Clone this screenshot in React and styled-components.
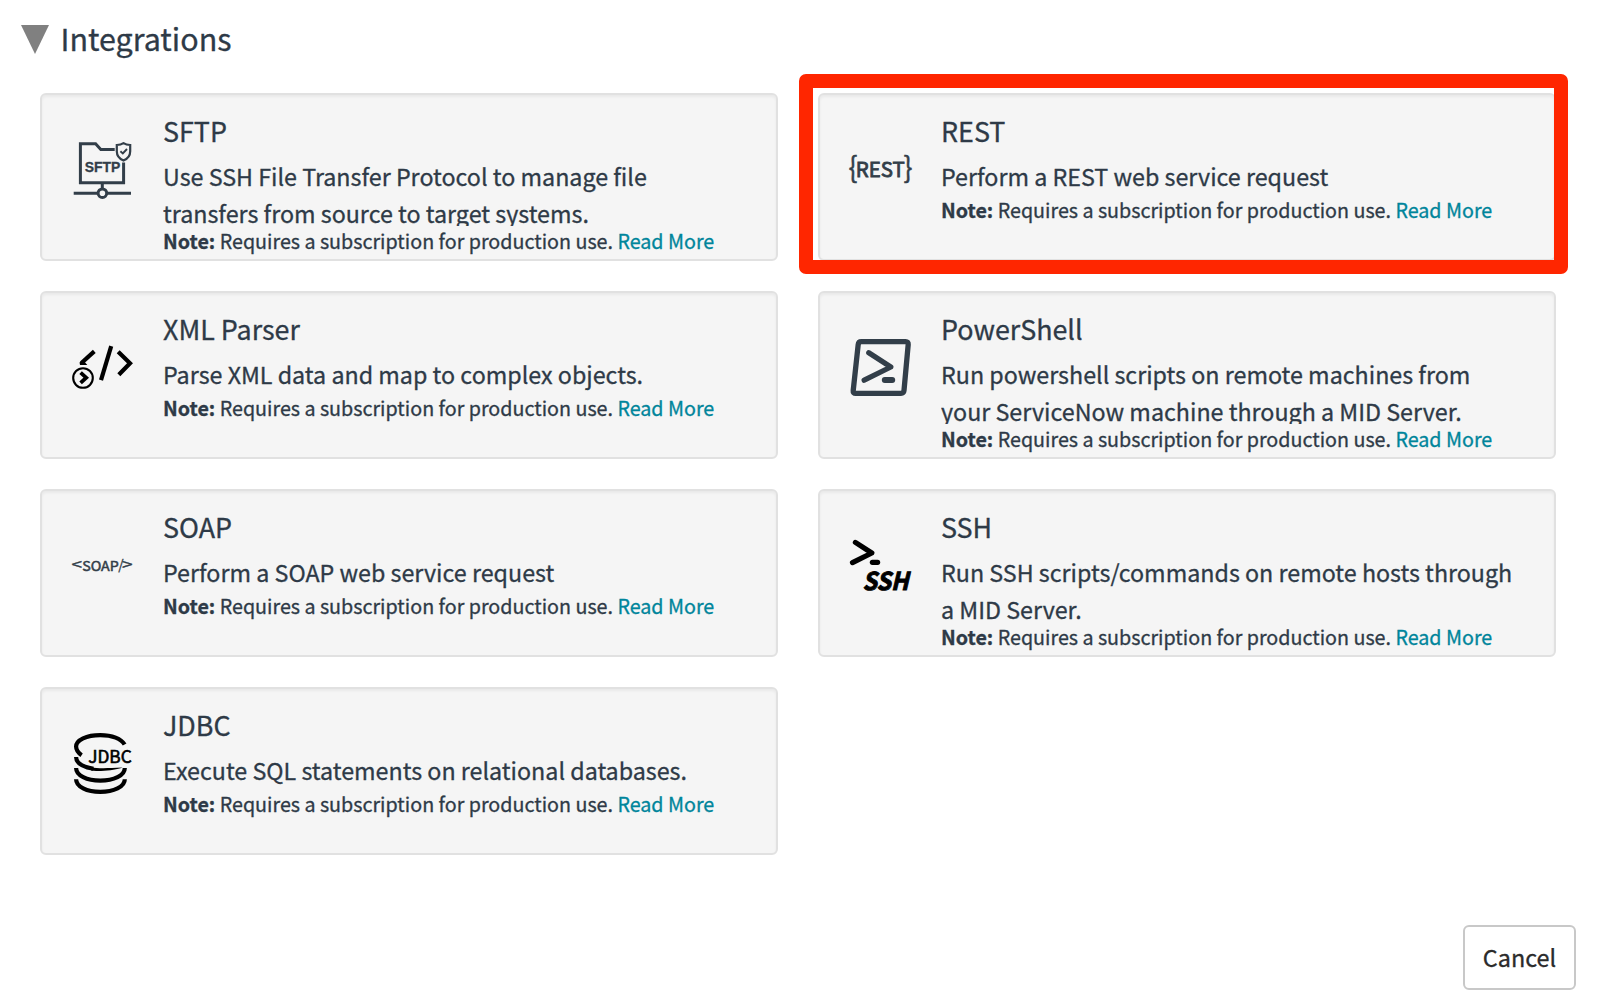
import React from 'react';
import styled, { createGlobalStyle } from 'styled-components';

const sans = `"Noto Sans CJK SC", "Noto Sans", sans-serif`;
const slate = '#2e3a47';
const iconSlate = '#323e49';

const GlobalStyle = createGlobalStyle`
  *, *::before, *::after { box-sizing: border-box; }
  body {
    margin: 0;
    background: #fff;
    color: ${slate};
    font-family: ${sans};
    -webkit-text-stroke: 0.3px currentColor;
  }
  svg text { -webkit-text-stroke: initial; }
  #root { height: 996px; overflow: hidden; }
`;

const Page = styled.main`
  display: flex;
  flex-direction: column;
  padding-top: 17px;
`;

const SectionHeader = styled.header`
  display: flex;
  align-items: flex-start;
  gap: 11.5px;
  height: 76px;
  padding-left: 21px;
`;

const Triangle = styled.svg`
  width: 28px;
  height: 29px;
  margin-top: 8px;
`;

const SectionTitle = styled.h1`
  margin: 0;
  font-size: 30.45px;
  font-weight: 400;
  line-height: 43px;
`;

const Grid = styled.div`
  display: grid;
  grid-template-columns: repeat(2, 738px);
  grid-auto-rows: 168px;
  gap: 30px 40px;
  padding-left: 40px;
`;

const CardBox = styled.article`
  position: relative;
  display: flex;
  gap: 30px;
  padding: 16px 20px 0 29px;
  border: 2px solid #e1e1e1;
  border-radius: 6px;
  background: #f5f5f5;
  box-shadow: inset 0 2px 3px rgba(0, 0, 0, 0.05);
`;

const Highlight = styled.span`
  position: absolute;
  inset: -21.5px -14px -15px -21.5px;
  border: 14px solid #ff2600;
  border-radius: 7px;
  pointer-events: none;
`;

const IconSvg = styled.svg`
  flex: none;
  width: 62px;
  height: 62px;
  margin-top: 28px;
  overflow: visible;
`;

const CardText = styled.div`
  flex: 1;
  min-width: 0;
  white-space: nowrap;
`;

const CardTitle = styled.h2`
  margin: 0 0 7px;
  font-size: 26.86px;
  font-weight: 400;
  line-height: 40px;
`;

const Description = styled.p`
  margin: 0;
  max-height: 68px;
  overflow: hidden;
  font-size: 23.28px;
  line-height: 37px;
  white-space: pre-line;
`;

const Note = styled.p`
  margin: 0;
  font-size: 19.7px;
  line-height: 29px;
`;

const ReadMore = styled.a`
  color: #00859b;
  text-decoration: none;
`;

const Footer = styled.footer`
  display: flex;
  justify-content: flex-end;
  padding: 70px 32px 0 0;
`;

const Button = styled.button`
  width: 113px;
  height: 65px;
  padding: 0 0 1px;
  border: 2px solid #c8c8c8;
  border-radius: 6px;
  background: #fff;
  color: #2b2b2b;
  font-family: ${sans};
  font-size: 23.4px;
  line-height: 36px;
`;

const Icon = ({ children }) => (
  <IconSvg viewBox="0 0 62 62" fill="none" aria-hidden="true">{children}</IconSvg>
);

const SftpIcon = () => (
  <Icon>
    <g stroke={iconSlate} strokeWidth="3">
      <path d="M43.7 10.4H29.8L24.6 4.8H9.4V43.7H52.6V23.5" />
      <path d="M31.3 43.7V50M2.7 54.3H60" />
      <circle cx="31.4" cy="54.2" r="4.3" fill="#f5f5f5" />
    </g>
    <path d="M52.5 4.2C54.6 5.6 57 6 59.2 6V12.2C59.2 17 56.6 19.8 52.5 21.5C48.4 19.8 45.8 17 45.8 12.2V6C48 6 50.4 5.6 52.5 4.2Z" stroke={iconSlate} strokeWidth="2.2" />
    <path d="M49.4 12.3L51.8 14.4L56 10" stroke={iconSlate} strokeWidth="1.9" />
    <text x="13.8" y="32.7" fontFamily="Liberation Sans, sans-serif" fontWeight="700" fontSize="14.4" textLength="35.6" lengthAdjust="spacingAndGlyphs" fill={iconSlate} stroke={iconSlate} strokeWidth="0.3">SFTP</text>
  </Icon>
);

const RestIcon = () => (
  <Icon>
    <g fill={iconSlate} stroke={iconSlate} strokeWidth="0.5" fontFamily={sans}>
      <text x="-0.4" y="39.4" fontSize="29" textLength="9" lengthAdjust="spacingAndGlyphs">{'{'}</text>
      <text x="6.8" y="38" fontSize="20.2" strokeWidth="0.8" textLength="49" lengthAdjust="spacingAndGlyphs">REST</text>
      <text x="54.4" y="39.4" fontSize="29" textLength="9" lengthAdjust="spacingAndGlyphs">{'}'}</text>
    </g>
  </Icon>
);

const XmlIcon = () => (
  <Icon>
    <g stroke="#000" strokeWidth="4.2">
      <path d="M23.3 14.4L10.4 26" />
      <path d="M40.2 9.2L30 43.2" />
      <path d="M47.2 14.8L59 26.3L47.8 37.8" />
    </g>
    <path d="M8.5 25.4L12 23L16.3 28H9Z" fill="#000" />
    <circle cx="12" cy="41" r="9.8" stroke="#000" strokeWidth="2.1" />
    <path d="M9.6 35.6L15.2 40.7L9.6 45.8" stroke="#000" strokeWidth="3.8" />
  </Icon>
);

const PowerShellIcon = () => (
  <Icon>
    <g stroke={iconSlate} strokeWidth="5.3" strokeLinecap="round" strokeLinejoin="round">
      <path d="M12.3 4.7H56.6Q59.4 4.7 59.2 7.5L55 53.6Q54.7 56.3 52 56.3H6.7Q3.9 56.3 4.2 53.6L9.2 7.5Q9.5 4.7 12.3 4.7Z" />
      <path d="M19.8 15.8L41.8 30L15.2 43.2" />
      <path d="M35.8 43H43.2" strokeWidth="6" />
    </g>
  </Icon>
);

const SoapIcon = () => (
  <Icon>
    <g fill={iconSlate} stroke={iconSlate} strokeWidth="0.3" fontFamily={sans} fontSize="13.7">
      <text x="0.4" y="35.3" textLength="10.6" lengthAdjust="spacingAndGlyphs" fontSize="15">&lt;</text>
      <text x="11.2" y="35.6" strokeWidth="0.5" textLength="36.6" lengthAdjust="spacingAndGlyphs">SOAP</text>
      <text x="47.2" y="35.3">/</text>
      <text x="51" y="35.3" textLength="10.6" lengthAdjust="spacingAndGlyphs" fontSize="15">&gt;</text>
    </g>
  </Icon>
);

const SshIcon = () => (
  <Icon>
    <g stroke="#000" strokeWidth="5.2" strokeLinecap="round" strokeLinejoin="round">
      <path d="M6.4 7.4L22.8 18L3.5 27.6" />
      <path d="M23.4 27.3H28.6" />
    </g>
    <text x="13.5" y="55.3" fill="#000" stroke="#000" strokeWidth="1" fontFamily={sans} fontWeight="700" fontStyle="italic" fontSize="24.6" textLength="46" lengthAdjust="spacingAndGlyphs">SSH</text>
  </Icon>
);

const JdbcIcon = () => (
  <Icon>
    <g stroke="#000" strokeWidth="4.2">
      <path d="M10.6 22.2C6.8 19.6 5.1 16.8 5.1 13.6C5.1 7 15.6 2.1 29.3 2.1C41 2.1 50.4 5.6 53.6 11.6" />
      <path d="M5.1 24C5.1 30 12 34 22.5 35.8" />
      <path d="M5.1 35C5.1 42.5 16 47.6 29.3 47.6S53.8 42.5 53.8 35" />
      <path d="M5.1 46.3C5.1 53.8 16 58.9 29.3 58.9S53.8 53.8 53.8 46.3" />
    </g>
    <path d="M20 34.2C27 35.6 36 35.2 51.5 34.6C45 37 34 39 20 37.4Z" fill="#000" />
    <text x="17.2" y="30.4" fill="#000" stroke="#000" strokeWidth="0.6" fontFamily={sans} fontSize="17" textLength="43.5" lengthAdjust="spacingAndGlyphs">JDBC</text>
  </Icon>
);

const integrations = [
  { title: 'SFTP', icon: SftpIcon, text: 'Use SSH File Transfer Protocol to manage file\ntransfers from source to target systems.' },
  { title: 'REST', icon: RestIcon, text: 'Perform a REST web service request', selected: true },
  { title: 'XML Parser', icon: XmlIcon, text: 'Parse XML data and map to complex objects.' },
  { title: 'PowerShell', icon: PowerShellIcon, text: 'Run powershell scripts on remote machines from\nyour ServiceNow machine through a MID Server.' },
  { title: 'SOAP', icon: SoapIcon, text: 'Perform a SOAP web service request' },
  { title: 'SSH', icon: SshIcon, text: 'Run SSH scripts/commands on remote hosts through\na MID Server.' },
  { title: 'JDBC', icon: JdbcIcon, text: 'Execute SQL statements on relational databases.' },
];

const Card = ({ title, icon: CardIcon, text, selected }) => (
  <CardBox>
    <CardIcon />
    <CardText>
      <CardTitle>{title}</CardTitle>
      <Description>{text}</Description>
      <Note>
        <b>Note:</b> Requires a subscription for production use. <ReadMore>Read More</ReadMore>
      </Note>
    </CardText>
    {selected && <Highlight />}
  </CardBox>
);

export default function App() {
  return (
    <Page>
      <GlobalStyle />
      <SectionHeader>
        <Triangle viewBox="0 0 28 29"><path d="M0 0H28L14 29Z" fill="#808080" /></Triangle>
        <SectionTitle>Integrations</SectionTitle>
      </SectionHeader>
      <Grid>
        {integrations.map((item) => <Card key={item.title} {...item} />)}
      </Grid>
      <Footer>
        <Button type="button">Cancel</Button>
      </Footer>
    </Page>
  );
}
